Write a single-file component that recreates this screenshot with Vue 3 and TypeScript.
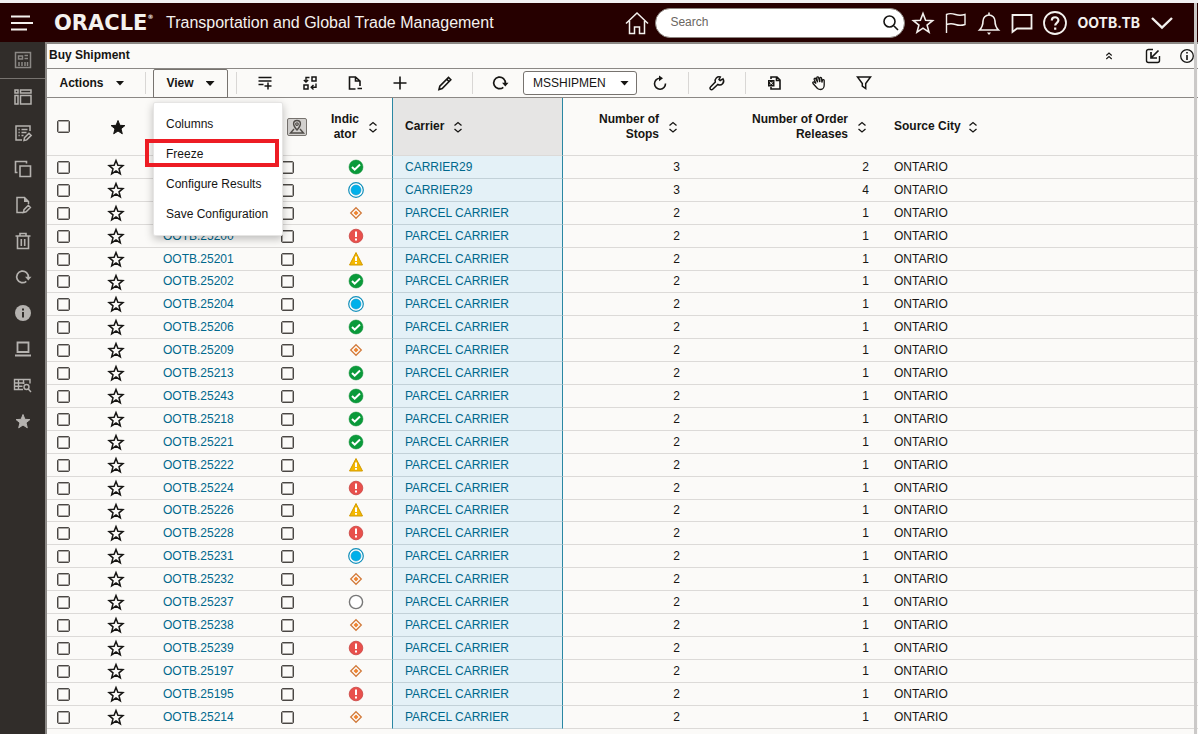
<script setup lang="ts">
import { h, ref } from 'vue'

interface Part {
  d: string
  fill?: string
  stroke?: string
  w?: number
}

type Status = 'ok' | 'info' | 'diamond' | 'error' | 'warn' | 'none'

interface Shipment {
  id: string
  status: Status
  carrier: string
  stops: number
  releases: number
}

const STAR = 'M10 3.500l1.900 4.800 5 .3-3.900 3.200 1.300 5-4.300-2.800-4.300 2.800 1.300-5-3.900-3.200 5-.3z'

const glyphs: Record<string, Part[]> = {
  menu: [{ d: 'M1 5.500h19M1 12h22M1 18.500h16', w: 2 }],
  home: [{ d: 'M1 12.500L12 2l11 10.500M4.500 10v12.500h5V16h5v6.500h5V10', w: 1.500 }],
  search: [{ d: 'M7.500 2a5.500 5.500 0 1 0 0 11a5.500 5.500 0 1 0 0-11M11.500 11.500L16 16', w: 1.600 }],
  starBig: [{ d: 'M12 2.500l2.600 6.700 7 .4-5.500 4.500 1.900 7.100-6-4-6 4 1.900-7.100L2.400 9.600l7-.4z', w: 1.600 }],
  flag: [{ d: 'M2.500 22V3.500c3-1.500 6-1 9 0s6 1 9.500 0v10c-3.500 1.200-6.500 1-9.500 0s-6-1-9 0', w: 1.400 }],
  bell: [
    { d: 'M2.500 19c3-3 3.500-5 3.500-9a6 6 0 0 1 12 0c0 4 .5 6 3.500 9zM12 4V1.500', w: 1.600 },
    { d: 'M10 21.500h4l-2 2.500z', fill: 'currentColor', stroke: 'none' }
  ],
  chat: [{ d: 'M2.500 4h19v13.500H7L2.500 21z', w: 1.800 }],
  help: [
    { d: 'M12 1a11 11 0 1 0 0 22a11 11 0 1 0 0-22', w: 1.800 },
    { d: 'M8.800 9.500c0-4.300 6.600-4.300 6.600-.2 0 2.500-3.200 2.500-3.200 5.200M12.200 16.500v2.300', w: 2.200 }
  ],
  chevron: [{ d: 'M2 7l10 9.500L22 7', w: 2.400 }],
  news: [
    { d: 'M2.500 2.500h15v15h-15z', w: 1.500 },
    { d: 'M5.500 6h4v3h-4zM11.500 5.500H15M11.500 8.500H15M6 12v4M9 12v4M12 12v4M14.500 12v4', w: 1.500 }
  ],
  layout: [{ d: 'M2 3h3v3H2zM7.500 3H18v3H7.500zM2 8.500h3V17H2zM7.500 8.500H18V17H7.500z', w: 1.500 }],
  formEdit: [
    { d: 'M9 17H3V3h14v5', w: 1.500 },
    { d: 'M5.500 6.500h1.200M8.500 6.500h6M5.500 9.500h1.200M8.500 9.500h5M5.500 12.500h1.200M8.500 12.500h2', w: 1.500 },
    { d: 'M11 17.500l.5-2.800 4.500-4.500 2.200 2.200-4.500 4.500z', w: 1.500 }
  ],
  copy: [{ d: 'M13.500 4.500V2.500h-11v11h2M7 7h10.500v10.500H7z', w: 1.600 }],
  docEdit: [
    { d: 'M10 17.500H4v-15h7.500l4 4V9', w: 1.500 },
    { d: 'M11 2v5h5z', fill: 'currentColor', stroke: 'none' },
    { d: 'M10.500 17.500l.5-2.800 4.300-4.300 2.100 2.100-4.300 4.300z', w: 1.500 }
  ],
  trash: [{ d: 'M2.500 5h15M7 5V2.500h6V5M4.500 5v12.500h11V5M8.300 8v7M11.700 8v7', w: 1.600 }],
  redo: [
    { d: 'M13.300 14.300A5.800 5.800 0 1 1 15.300 10.500', w: 1.700 },
    { d: 'M12 9.800h6.500l-3.200 3.700z', fill: 'currentColor', stroke: 'none' }
  ],
  infoFill: [
    { d: 'M10 2a8 8 0 1 0 0 16a8 8 0 1 0 0-16', fill: 'currentColor', stroke: 'none' },
    { d: 'M10 5.500v2M10 9v5.500', stroke: '#312d2a', w: 2 }
  ],
  laptop: [{ d: 'M4.500 3.500h11v9.500h-11zM2 16.500h16', w: 1.800 }],
  gridSearch: [
    { d: 'M10 14.500H1.500v-10h15.500v4M1.500 8h10M1.500 11.200h8M5.500 4.500v10M10.500 4.500V9', w: 1.400 },
    { d: 'M13.500 9.500a2.500 2.500 0 1 0 0 5a2.500 2.500 0 1 0 0-5M15.300 14l2.700 3', w: 1.400 }
  ],
  starFill: [{ d: STAR, fill: 'currentColor', w: 1 }],
  star: [{ d: STAR, w: 1.500 }],
  addLine: [
    { d: 'M3.500 4.500h13M3.500 8h13M3.500 11.500h5', w: 1.500 },
    { d: 'M13 9.500v7M9.500 13h7', w: 1.500 }
  ],
  swap: [
    { d: 'M12 4h4v4h-4zM4 12h4v4H4z', w: 1.500 },
    { d: 'M9.500 4.500H6V9M3.800 7L6 9l2.200-2M16 10.500v3.800h-4.500M13.500 12l-2.300 2.300 2.300 2.200', w: 1.400 }
  ],
  docMinus: [{ d: 'M10.500 16H4.500V4h6l4.500 4v5M10.500 4v4H15M12.500 15.500H17', w: 1.600 }],
  plus: [{ d: 'M10 3.500v13M3.500 10h13', w: 1.600 }],
  pencil: [{ d: 'M4 16.500l.8-3.300L13.500 4.500l2.300 2.300L7.200 15.500zM11.800 6.300l2.300 2.300', w: 1.600 }],
  reload: [
    { d: 'M10 5.200A5.500 5.500 0 1 0 15.500 10.500', w: 1.600 },
    { d: 'M9 2.500l4 2.800-4 3z', fill: 'currentColor', stroke: 'none' }
  ],
  wrench: [{ d: 'M16 5.800l-2.800 1.700-1.200-1L13.300 4a4 4 0 0 0-5 5L3.500 14a1.400 1.400 0 0 0 2.200 2.300L10.800 11.500A4 4 0 0 0 16 5.800z', w: 1.500 }],
  excel: [
    { d: 'M7 6V4h6l3 3v9H7V14M12.500 4v3.500H16', w: 1.600 },
    { d: 'M4 7h6.500v6.500H4z', fill: 'currentColor', stroke: 'none' },
    { d: 'M5.800 8.700l3 3M8.800 8.700l-3 3', stroke: '#fbfaf8', w: 1 }
  ],
  hand: [{ d: 'M8.500 15.500L4 10.500c-.8-1.200.6-2 1.500-1.200l1.500 1.200-1.800-4c-.4-1.200 1.200-1.700 1.700-.6L8.600 9.300 7.800 5c-.2-1.300 1.500-1.500 1.800-.3l1.200 4.300V5.300c.1-1.200 1.700-1.100 1.800 0l.3 4.200.5-2.200c.4-1 1.800-.8 1.800.3v4.400c0 2.500-1.500 4.500-3.500 4.500-1.500 0-2.300-.2-3.200-1z', w: 1.300 }],
  filter: [{ d: 'M3.500 4h13L11.700 10.500v5L8.300 13v-2.500z', w: 1.500 }],
  collapse: [{ d: 'M7.300 9.500L10 7l2.700 2.500M7.300 13l2.700-2.500 2.700 2.500', w: 1.100 }],
  popIn: [
    { d: 'M10 3.500H5.500a2 2 0 0 0-2 2v9a2 2 0 0 0 2 2h9a2 2 0 0 0 2-2V10', w: 1.400 },
    { d: 'M15.500 4.500L9 11M8 6v6h6', w: 1.700 }
  ],
  infoLine: [
    { d: 'M10 3.700a6.300 6.300 0 1 0 0 12.600a6.300 6.300 0 1 0 0-12.600', w: 1.300 },
    { d: 'M10 6v1.600M10 9v5', w: 1.600 }
  ],
  sort: [{ d: 'M6.500 8.500L10 5.500l3.500 3M6.500 12L10 15l3.500-3', w: 1.300 }],
  pin: [
    { d: 'M2 1.500h16a1.500 1.500 0 0 1 1.500 1.500v14a1.500 1.500 0 0 1-1.500 1.500H2A1.500 1.500 0 0 1 .5 17V3A1.500 1.500 0 0 1 2 1.500z', fill: '#d2d0ce', stroke: '#77736f', w: 1 },
    { d: 'M10 13C4.500 7 6.500 3.500 10 3.500s5.500 3.500 0 9.500zM7 12l-3.500 4h13L13 12', stroke: '#504c48', w: 1.400 },
    { d: 'M10 5.800a1.300 1.300 0 1 0 0 2.600a1.300 1.300 0 1 0 0-2.600', stroke: '#504c48', w: 1.200 }
  ],
  ok: [
    { d: 'M10 3a7 7 0 1 0 0 14a7 7 0 1 0 0-14', fill: '#0a9a3a', stroke: '#0a8a32', w: 0.500 },
    { d: 'M6 10l2.700 2.700L14 7.500', stroke: '#fff', w: 2 }
  ],
  info: [
    { d: 'M10 2.700a7.300 7.300 0 1 0 0 14.600a7.300 7.300 0 1 0 0-14.600', fill: '#fff', stroke: '#128fba', w: 1.200 },
    { d: 'M10 5a5 5 0 1 0 0 10a5 5 0 1 0 0-10', fill: '#00b0ea', stroke: '#1296c4', w: 0.600 }
  ],
  diamond: [
    { d: 'M10 4.700l5.300 5.300-5.300 5.300L4.700 10z', fill: '#fff', stroke: '#d17a3b', w: 1.300 },
    { d: 'M10 7.500l2.500 2.500-2.500 2.500L7.500 10z', fill: '#ee8430', stroke: 'none' }
  ],
  error: [
    { d: 'M10 3.200a6.800 6.800 0 1 0 0 13.600a6.800 6.800 0 1 0 0-13.600', fill: '#e8504c', stroke: '#c94340', w: 0.800 },
    { d: 'M10 5.500v5.500M10 12.500v2', stroke: '#fff', w: 2 }
  ],
  warn: [
    { d: 'M10 3.500l6.500 12.500h-13z', fill: '#f4b800', stroke: '#d29a00', w: 1 },
    { d: 'M10 7.500v4.500M10 13v1.800', stroke: '#fff', w: 2 }
  ],
  none: [{ d: 'M10 3.400a6.600 6.600 0 1 0 0 13.200a6.600 6.600 0 1 0 0-13.200', fill: '#fff', stroke: '#777', w: 1.400 }]
}

const Glyph = (props: { name: string; size?: number }) => {
  const s = props.size ?? 20
  return h(
    'svg',
    { class: 'glyph', width: s, height: s, viewBox: `0 0 ${s} ${s}`, fill: 'none', 'aria-hidden': 'true' },
    glyphs[props.name].map((p) =>
      h('path', { d: p.d, fill: p.fill ?? 'none', stroke: p.stroke ?? 'currentColor', 'stroke-width': p.w ?? 1.5 })
    )
  )
}
Glyph.props = ['name', 'size']

const sideItems = [
  ['news', 'News'], ['layout', 'Layout'], ['formEdit', 'Edit form'], ['copy', 'Copy'], ['docEdit', 'Edit document'],
  ['trash', 'Delete'], ['redo', 'Refresh'], ['infoFill', 'Information'], ['laptop', 'Workbench'],
  ['gridSearch', 'Finder'], ['starFill', 'Favorites']
]
const headerTools = [['starBig', 'Favorites'], ['flag', 'Flags'], ['bell', 'Notifications'], ['chat', 'Messages'], ['help', 'Help']]
const editTools = [['addLine', 'Insert'], ['swap', 'Swap'], ['docMinus', 'Document'], ['plus', 'New'], ['pencil', 'Edit']]
const endTools = [['excel', 'Export to Excel'], ['hand', 'Select'], ['filter', 'Filter']]
const menuItems = ['Columns', 'Freeze', 'Configure Results', 'Save Configuration']

const menuOpen = ref(true)
const query = ref('')

const source: [string, Status][] = [
  ['', 'ok'], ['', 'info'], ['', 'diamond'], ['OOTB.25200', 'error'], ['OOTB.25201', 'warn'],
  ['OOTB.25202', 'ok'], ['OOTB.25204', 'info'], ['OOTB.25206', 'ok'], ['OOTB.25209', 'diamond'], ['OOTB.25213', 'ok'],
  ['OOTB.25243', 'ok'], ['OOTB.25218', 'ok'], ['OOTB.25221', 'ok'], ['OOTB.25222', 'warn'], ['OOTB.25224', 'error'],
  ['OOTB.25226', 'warn'], ['OOTB.25228', 'error'], ['OOTB.25231', 'info'], ['OOTB.25232', 'diamond'], ['OOTB.25237', 'none'],
  ['OOTB.25238', 'diamond'], ['OOTB.25239', 'error'], ['OOTB.25197', 'diamond'], ['OOTB.25195', 'error'], ['OOTB.25214', 'diamond']
]
const rows: Shipment[] = source.map(([id, status], i) => ({
  id,
  status,
  carrier: i < 2 ? 'CARRIER29' : 'PARCEL CARRIER',
  stops: i < 2 ? 3 : 2,
  releases: i === 0 ? 2 : i === 1 ? 4 : 1
}))
</script>

<template>
  <div class="app">
    <header class="top">
      <button class="bare hamburger" aria-label="Menu"><Glyph name="menu" :size="24" /></button>
      <div class="brand">ORACLE<sup>®</sup></div>
      <h1 class="product">Transportation and Global Trade Management</h1>
      <button class="bare home" aria-label="Home"><Glyph name="home" :size="24" /></button>
      <label class="search">
        <input v-model="query" type="text" placeholder="Search" aria-label="Search" />
        <Glyph name="search" :size="18" />
      </label>
      <nav class="tools">
        <button v-for="t in headerTools" :key="t[0]" class="bare" :aria-label="t[1]">
          <Glyph :name="t[0]" :size="24" />
        </button>
      </nav>
      <button class="bare user">OOTB.TB <Glyph name="chevron" :size="24" /></button>
    </header>

    <div class="body">
      <aside class="side">
        <button v-for="s in sideItems" :key="s[0]" class="bare" :aria-label="s[1]"><Glyph :name="s[0]" /></button>
      </aside>

      <main class="main">
        <div class="titlebar">
          <h2>Buy Shipment</h2>
          <button class="bare collapse" aria-label="Collapse"><Glyph name="collapse" /></button>
          <button class="bare pop" aria-label="Restore"><Glyph name="popIn" /></button>
          <button class="bare" aria-label="Information"><Glyph name="infoLine" /></button>
        </div>

        <div class="toolbar">
          <button class="bare drop actions">Actions <i class="caret"></i></button>
          <span class="sep"></span>
          <div class="view-wrap">
            <button class="bare drop view" :aria-expanded="menuOpen" @click="menuOpen = !menuOpen">View <i class="caret"></i></button>
            <ul v-if="menuOpen" class="menu">
              <li v-for="m in menuItems" :key="m" :class="{ marked: m === 'Freeze' }">
                <button class="bare">{{ m }}</button>
              </li>
            </ul>
          </div>
          <span class="sep"></span>
          <div class="group">
            <button v-for="t in editTools" :key="t[0]" class="bare tool" :aria-label="t[1]"><Glyph :name="t[0]" /></button>
          </div>
          <span class="sep"></span>
          <button class="bare rerun" aria-label="Rerun"><Glyph name="redo" /></button>
          <div class="pick">
            <select aria-label="Screen set"><option>MSSHIPMENT</option></select>
            <i class="caret"></i>
          </div>
          <button class="bare reload" aria-label="Reload"><Glyph name="reload" /></button>
          <span class="sep"></span>
          <button class="bare wide" aria-label="Settings"><Glyph name="wrench" /></button>
          <span class="sep"></span>
          <div class="group">
            <button v-for="t in endTools" :key="t[0]" class="bare tool" :aria-label="t[1]"><Glyph :name="t[0]" /></button>
          </div>
        </div>

        <table class="grid">
          <colgroup>
            <col class="c-check" /><col class="c-star" /><col class="c-id" /><col class="c-map" /><col class="c-ind" />
            <col class="c-carrier" /><col class="c-stops" /><col class="c-rel" /><col />
          </colgroup>
          <thead>
            <tr>
              <th class="check"><input type="checkbox" aria-label="Select all" /></th>
              <th class="fav"><Glyph name="starFill" /></th>
              <th></th>
              <th class="map"><Glyph name="pin" /></th>
              <th class="ind"><div class="head"><span>Indic<br />ator</span><Glyph name="sort" /></div></th>
              <th class="carrier"><div class="head"><span>Carrier</span><Glyph name="sort" /></div></th>
              <th class="num"><div class="head"><span>Number of<br />Stops</span><Glyph name="sort" /></div></th>
              <th class="num"><div class="head"><span>Number of Order<br />Releases</span><Glyph name="sort" /></div></th>
              <th class="city"><div class="head"><span>Source City</span><Glyph name="sort" /></div></th>
            </tr>
          </thead>
          <tbody>
            <tr v-for="(r, i) in rows" :key="i">
              <td class="check"><input type="checkbox" :aria-label="'Select row ' + (i + 1)" /></td>
              <td class="fav"><Glyph name="star" /></td>
              <td class="id"><a v-if="r.id" href="#">{{ r.id }}</a></td>
              <td class="map"><input type="checkbox" :aria-label="'Map row ' + (i + 1)" /></td>
              <td class="ind"><Glyph :name="r.status" /></td>
              <td class="carrier"><a href="#">{{ r.carrier }}</a></td>
              <td class="num">{{ r.stops }}</td>
              <td class="num">{{ r.releases }}</td>
              <td class="city">ONTARIO</td>
            </tr>
          </tbody>
        </table>
      </main>
    </div>
    <div class="rail"></div>
  </div>
</template>

<style>
body {
  margin: 0;
  background: #fbfaf8;
}
.glyph {
  display: block;
  flex: none;
}
</style>

<style scoped>
* {
  box-sizing: border-box;
}
.app {
  position: relative;
  display: flex;
  flex-direction: column;
  min-height: 100vh;
  overflow: hidden;
  border-top: 3px solid #f1f0f2;
  background: #fbfaf8;
  color: #161513;
  font: 12px/15px "Liberation Sans", Arial, sans-serif;
}
.bare {
  display: flex;
  align-items: center;
  justify-content: center;
  padding: 0;
  border: 0;
  background: none;
  color: inherit;
  font: inherit;
  cursor: pointer;
}
h1,
h2,
ul {
  margin: 0;
  padding: 0;
  list-style: none;
}
.top {
  display: flex;
  align-items: center;
  height: 39px;
  padding: 0 24px 0 10px;
  background: #260000;
  color: #f4f1ee;
}
.hamburger {
  width: 44px;
  justify-content: flex-start;
}
.brand {
  width: 112px;
  font: bold 21px/24px "DejaVu Sans", sans-serif;
  white-space: nowrap;
}
.brand sup {
  font-size: 6px;
  line-height: 12px;
  vertical-align: top;
}
.product {
  flex: 1;
  font-size: 16px;
  line-height: 20px;
  font-weight: normal;
  white-space: nowrap;
}
.home {
  margin-right: 6px;
}
.search {
  display: flex;
  align-items: center;
  width: 250px;
  height: 30px;
  padding: 0 4px 0 14px;
  border: 1px solid #8b8580;
  border-radius: 15px;
  background: #fff;
  color: #161513;
}
.search input {
  flex: 1;
  min-width: 0;
  padding: 0;
  border: 0;
  outline: 0;
  background: none;
  font: inherit;
}
.search input::placeholder {
  color: #6b6661;
  opacity: 1;
}
.tools {
  display: flex;
  gap: 9px;
  margin: 0 10px 0 6px;
}
.user {
  gap: 10px;
  font: bold 14px/18px Inter, sans-serif;
}
.body {
  display: flex;
  flex: 1;
}
.side {
  display: flex;
  flex-direction: column;
  width: 47px;
  border-right: 2px solid #8b8885;
  background: #312d2a;
  color: #b5b2af;
}
.side button {
  height: 36px;
}
.side button:first-child {
  height: 37px;
  border-bottom: 1px solid #77736f;
  color: #8b8885;
}
.main {
  flex: 1;
  min-width: 0;
  border-top: 2px solid #8b8885;
}
.titlebar {
  display: flex;
  align-items: center;
  height: 25px;
  padding: 0 1px 0 2px;
  border-bottom: 1px solid #8b8885;
}
.titlebar h2 {
  flex: 1;
  padding-bottom: 2px;
  font-size: 12px;
  line-height: 15px;
}
.titlebar .bare {
  width: 20px;
}
.titlebar .collapse {
  margin-right: 24px;
}
.titlebar .pop {
  margin-right: 14px;
}
.toolbar {
  display: flex;
  align-items: center;
  height: 29px;
  border-bottom: 1px solid #8b8885;
}
.drop {
  gap: 12px;
  font-weight: bold;
}
.caret {
  width: 9px;
  height: 5px;
  background: #161513;
  clip-path: polygon(0 0, 100% 0, 50% 100%);
}
.actions {
  width: 98px;
  padding-right: 8px;
}
.sep {
  width: 1px;
  height: 22px;
  background: #d9d7d5;
}
.view-wrap {
  position: relative;
  align-self: stretch;
  margin: 0 8px 0 7px;
}
.view {
  width: 75px;
  height: 29px;
  border: 1px solid #77736f;
  border-radius: 2px 2px 0 0;
}
.menu {
  position: absolute;
  z-index: 2;
  top: 33px;
  left: 0;
  width: 130px;
  padding: 6px 0;
  border: 1px solid #e6e5e4;
  border-radius: 2px;
  background: #fff;
  box-shadow: 0 3px 8px rgba(0, 0, 0, 0.25);
}
.menu li {
  position: relative;
}
.menu button {
  width: 100%;
  height: 30px;
  padding-left: 12px;
  justify-content: flex-start;
  white-space: nowrap;
}
.menu .marked::after {
  content: "";
  position: absolute;
  box-sizing: border-box;
  top: 0;
  left: -9px;
  width: 134px;
  height: 28px;
  border: 4px solid #ed1c24;
  pointer-events: none;
}
.group {
  display: flex;
  margin: 0 5px;
}
.tool {
  width: 45px;
}
.rerun {
  width: 50px;
  padding-left: 4px;
}
.pick {
  display: flex;
  align-items: center;
  width: 114px;
  height: 24px;
  padding: 0 7px 0 9px;
  border: 1px solid #77736f;
  border-radius: 3px;
  background: #fff;
}
.pick select {
  flex: 1;
  min-width: 0;
  margin-right: 14px;
  padding: 0;
  border: 0;
  appearance: none;
  background: none;
  color: inherit;
  font: inherit;
}
.reload {
  width: 46px;
}
.reload + .sep {
  margin-left: 5px;
}
.wide {
  width: 56px;
}
.grid {
  width: 100%;
  table-layout: fixed;
  border-collapse: separate;
  border-spacing: 0;
}
.c-check {
  width: 40px;
}
.c-star {
  width: 63px;
}
.c-id {
  width: 121px;
}
.c-map {
  width: 46px;
}
.c-ind {
  width: 75px;
}
.c-carrier {
  width: 171px;
}
.c-stops {
  width: 124px;
}
.c-rel {
  width: 189px;
}
.grid th,
.grid td {
  padding: 0;
  border-bottom: 1px solid #dcdad8;
  text-align: left;
  vertical-align: middle;
}
.grid th {
  height: 58px;
}
.grid td {
  height: 23px;
}
.grid tr:nth-child(10n + 6) td {
  height: 22px;
}
.grid input {
  display: block;
  width: 13px;
  height: 13px;
  margin: 0;
  appearance: none;
  border: 1px solid #4a4744;
  border-radius: 2px;
  box-shadow: inset 0 0 0 1px #a9a6a3;
}
.grid a {
  color: #00688c;
  text-decoration: none;
}
.grid .check,
.grid .map {
  padding-left: 10px;
}
.grid th.map {
  padding-left: 16px;
}
.grid .fav {
  padding-left: 19px;
}
.grid th.fav {
  padding-left: 21px;
}
.grid .id {
  padding-left: 13px;
}
.grid td.ind {
  padding: 0 0 1px 29px;
}
.grid .carrier {
  padding-left: 12px;
  border-right: 1px solid #2a87a3;
  border-left: 1px solid #2a87a3;
  background: #e6e5e4;
}
.grid td.carrier {
  border-bottom-color: #c2d1d8;
  background: #e4f1f7;
}
.grid .num {
  padding-right: 7px;
  text-align: right;
}
.grid .city {
  padding-left: 18px;
}
.head {
  display: flex;
  align-items: center;
  gap: 4px;
}
.num .head {
  justify-content: flex-end;
  margin-right: -3px;
}
.ind .head {
  justify-content: center;
  padding-left: 5px;
  text-align: center;
}
.city .head {
  gap: 2px;
}
.rail {
  position: absolute;
  z-index: 3;
  top: 0;
  right: 1px;
  bottom: 0;
  width: 3px;
  background: #cbc9c8;
}
</style>
